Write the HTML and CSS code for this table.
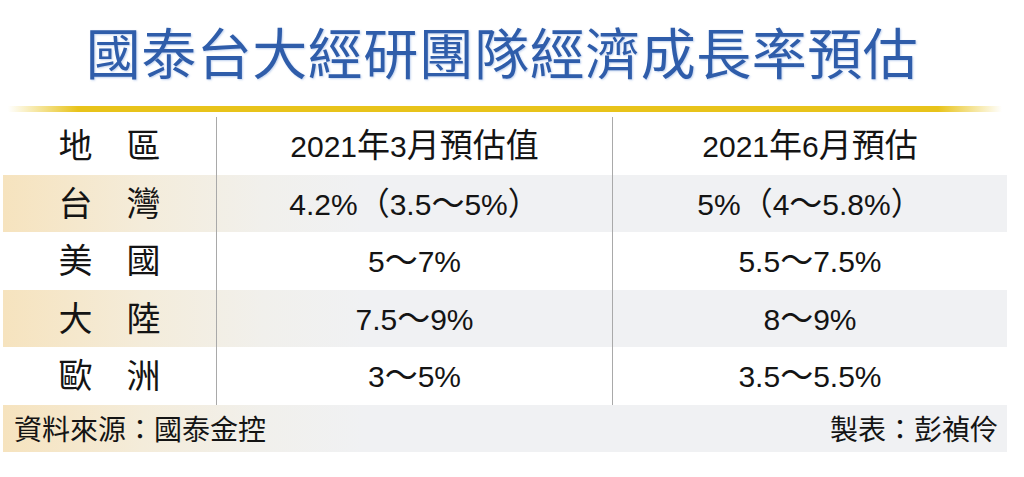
FILE: index.html
```html
<!DOCTYPE html>
<html lang="zh-Hant">
<head>
<meta charset="utf-8">
<link rel="stylesheet" href="styles.css">
</head>
<body>
<div class="page">
  <h1 class="title">國泰台大經研團隊經濟成長率預估</h1>
  <div class="rule"></div>
  <div class="table">
    <div class="row">
      <div class="cell label">地　區</div>
      <div class="cell">2021<span class="c">年</span>3<span class="c">月預估值</span></div>
      <div class="cell">2021<span class="c">年</span>6<span class="c">月預估</span></div>
    </div>
    <div class="row shaded">
      <div class="cell label">台　灣</div>
      <div class="cell">4.2%<span class="c p">（</span>3.5<span class="c">～</span>5%<span class="c p">）</span></div>
      <div class="cell">5%<span class="c p">（</span>4<span class="c">～</span>5.8%<span class="c p">）</span></div>
    </div>
    <div class="row">
      <div class="cell label">美　國</div>
      <div class="cell">5<span class="c">～</span>7%</div>
      <div class="cell">5.5<span class="c">～</span>7.5%</div>
    </div>
    <div class="row shaded">
      <div class="cell label">大　陸</div>
      <div class="cell">7.5<span class="c">～</span>9%</div>
      <div class="cell">8<span class="c">～</span>9%</div>
    </div>
    <div class="row">
      <div class="cell label">歐　洲</div>
      <div class="cell">3<span class="c">～</span>5%</div>
      <div class="cell">3.5<span class="c">～</span>5.5%</div>
    </div>
    <div class="footer shaded">
      <span>資料來源：國泰金控</span>
      <span>製表：彭禎伶</span>
    </div>
  </div>
</div>
</body>
</html>
```

FILE: styles.css
```css
html, body {
  margin: 0;
  padding: 0;
  background: #ffffff;
}

.page {
  width: 1024px;
  height: 477px;
  overflow: hidden;
  font-family: "Liberation Sans", "Noto Sans CJK TC", sans-serif;
  color: #141414;
}

.title {
  margin: 0;
  height: 106px;
  box-sizing: border-box;
  padding-top: 17px;
  padding-right: 20px;
  text-align: center;
  font-family: "Noto Sans CJK TC", sans-serif;
  font-weight: 400;
  font-size: 55px;
  line-height: 66px;
  letter-spacing: 0.5px;
  color: #2f5daa;
  text-shadow: 1px 1px 2px rgba(80, 130, 210, 0.35);
}

.rule {
  margin-left: 8px;
  width: 994px;
  height: 6px;
  background: linear-gradient(to right,
    rgba(232, 195, 26, 0) 0,
    #e8c31a 70px,
    #e8c31a 930px,
    rgba(232, 195, 26, 0) 994px);
}

.table {
  margin-top: 5px;
  margin-left: 3px;
  width: 1004px;
}

.row {
  display: grid;
  grid-template-columns: 213px 396px 395px;
  height: 57.5px;
  overflow: hidden;
}

.cell {
  text-align: center;
  font-size: 30px;
  line-height: 53px;
  white-space: nowrap;
}

.cell + .cell {
  border-left: 1px solid #a9a9a9;
}

.c {
  font-family: "Noto Sans CJK TC", sans-serif;
  font-size: 33px;
}

.p {
  font-size: 32px;
}

.label {
  font-family: "Noto Sans CJK TC", sans-serif;
  font-size: 34px;
}

.shaded {
  background: linear-gradient(to right,
    #f6e3be 0,
    #f4ecda 140px,
    #f1f0ec 260px,
    #f0f1f3 360px);
}

.footer {
  height: 47px;
  display: flex;
  align-items: center;
  justify-content: space-between;
  padding: 0 9px 0 11px;
  font-family: "Noto Sans CJK TC", sans-serif;
  font-size: 28px;
  line-height: 1;
}
```
